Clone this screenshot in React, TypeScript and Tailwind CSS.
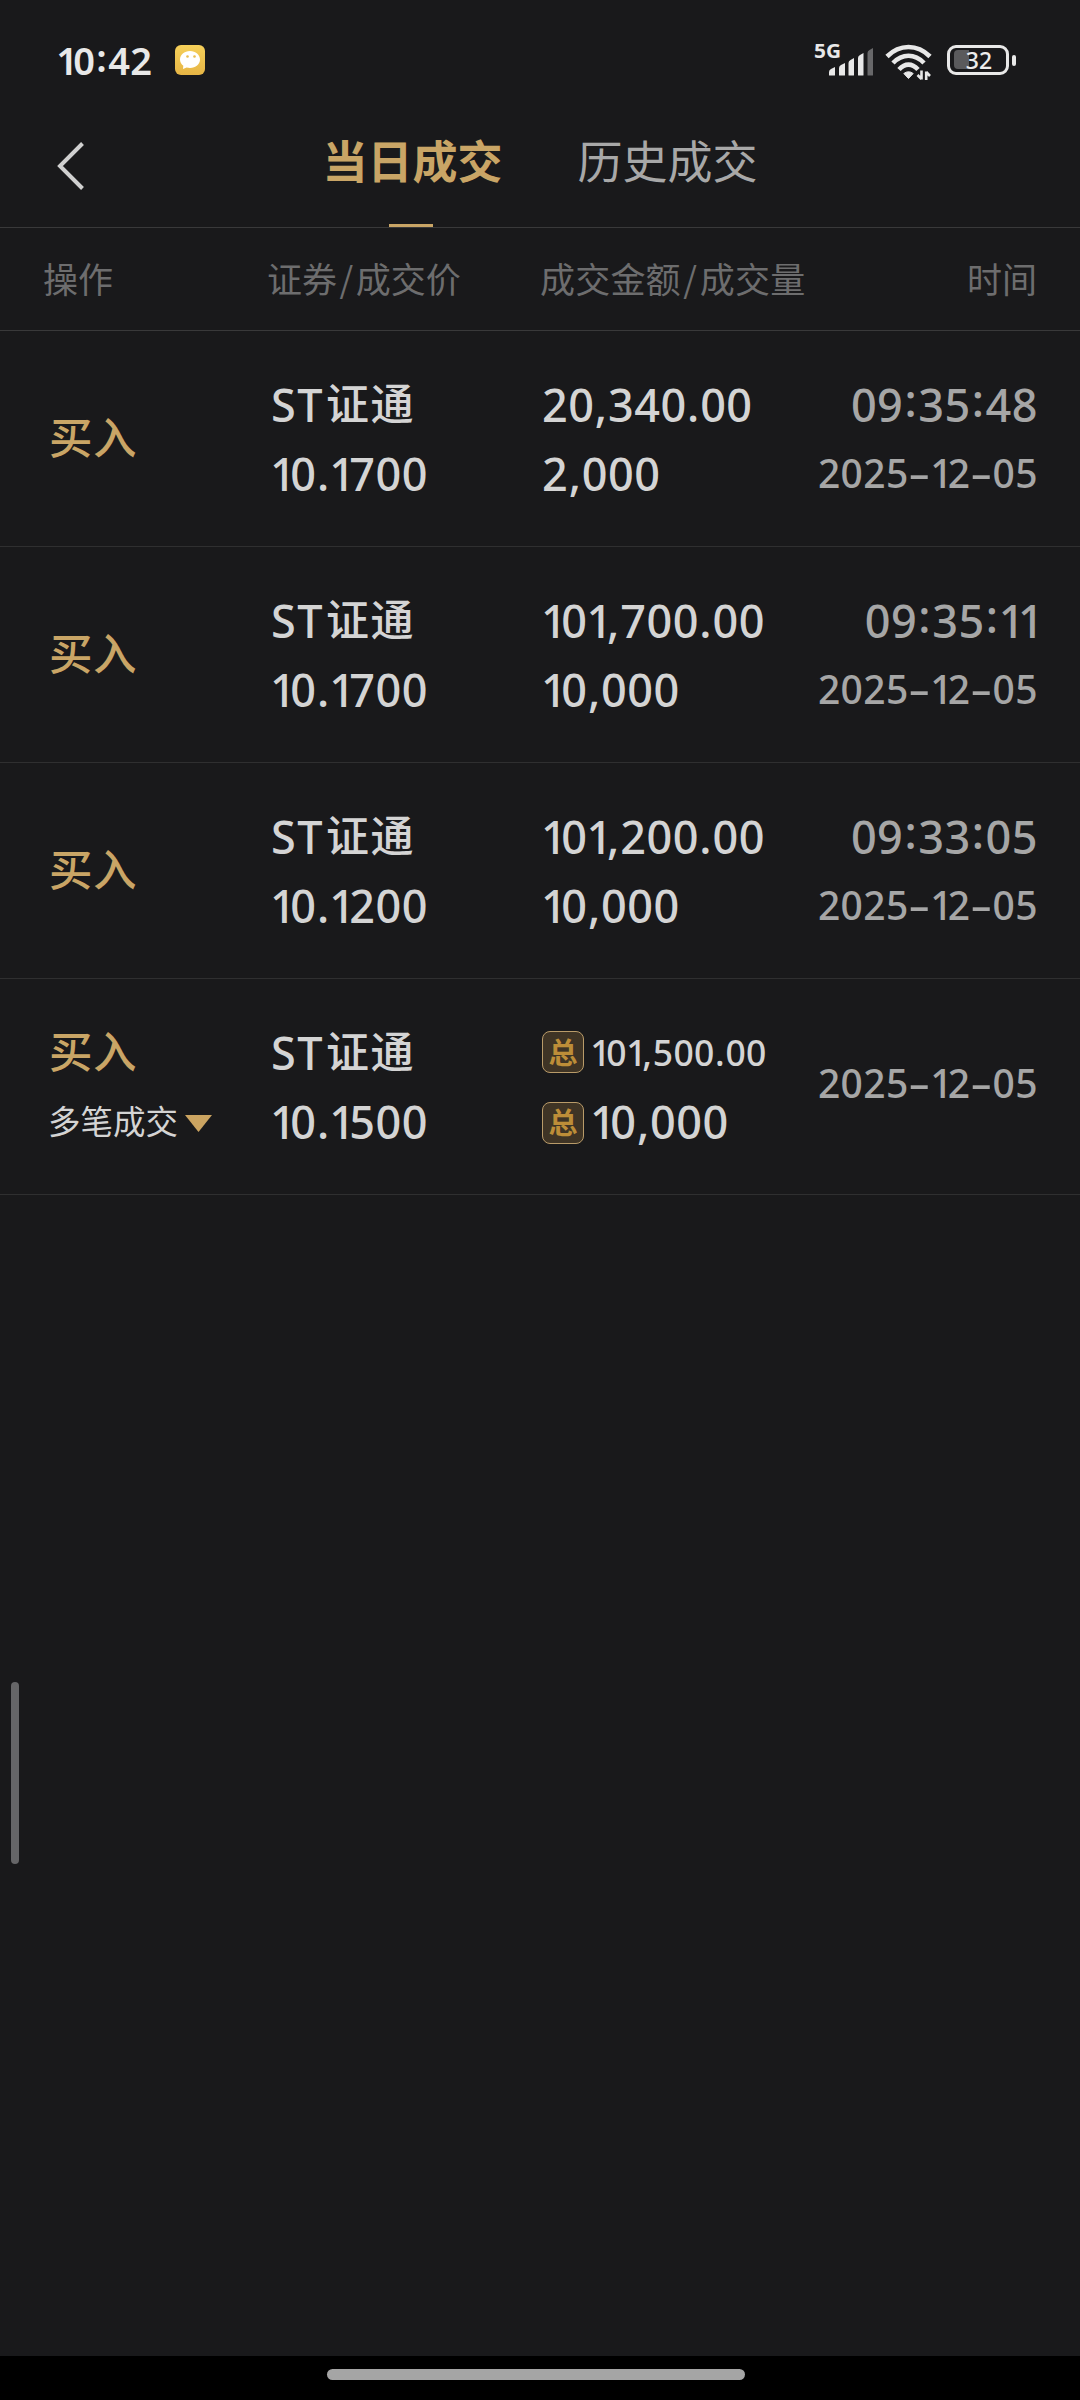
import React, { Fragment } from "react";

type Trade = {
  name: string;
  price: string;
  amount: string;
  volume: string;
  date: string;
  time?: string;
  multi?: boolean;
};

const trades: Trade[] = [
  { name: "证通", price: "10.1700", amount: "20,340.00", volume: "2,000", time: "09:35:48", date: "2025-12-05" },
  { name: "证通", price: "10.1700", amount: "101,700.00", volume: "10,000", time: "09:35:11", date: "2025-12-05" },
  { name: "证通", price: "10.1200", amount: "101,200.00", volume: "10,000", time: "09:33:05", date: "2025-12-05" },
  { name: "证通", price: "10.1500", amount: "101,500.00", volume: "10,000", date: "2025-12-05", multi: true },
];

/** Digits with proportional ones, raised colons and long hyphens. */
function Num({ children }: { children: string }) {
  return (
    <span className="tracking-[0.01em]">
      {children.split(/([1:.,-])/).map((part, i) => {
        if (part === "1") return <span key={i} className="-ml-[0.02em] tracking-[-0.125em]">1</span>;
        if (part === ":") return <span key={i} className="relative -top-[0.09em] mx-[0.025em]">:</span>;
        if (part === "-") return <span key={i} className="mx-[0.12em] inline-block scale-x-[1.75]">-</span>;
        if (part === "." || part === ",") return <span key={i} className="mx-[0.01em]">{part}</span>;
        return <Fragment key={i}>{part}</Fragment>;
      })}
    </span>
  );
}

function SignalIcon() {
  return (
    <svg width="60" height="44" viewBox="0 -5 60 44">
      <text x="0" y="15" fontSize="19.500" fontWeight="700" fill="#e8e8e8" fontFamily="'Noto Sans', sans-serif" textLength="27" lengthAdjust="spacingAndGlyphs">5G</text>
      <path d="M15 32v-3q0-2 2-3l4-2v8q0 .5-.5.500h-5Q15 32.500 15 32Z" fill="#e8e8e8" />
      <path d="M25 32v-7q0-2 2-3l4-2v12q0 .5-.5.500h-5Q25 32.500 25 32Z" fill="#e8e8e8" />
      <path d="M34.500 32V20q0-2 2-3l3.500-2v17q0 .5-.5.500h-4.500Q34.500 32.500 34.500 32Z" fill="#e8e8e8" />
      <path d="M44 32V15q0-2 2-3l3.500-2v22q0 .5-.5.500h-4.500Q44 32.500 44 32Z" fill="#e8e8e8" />
      <path d="M53.500 32V10q0-2 2-3l3.500-2v27q0 .5-.5.500h-4.500Q53.500 32.500 53.500 32Z" fill="#68686a" />
    </svg>
  );
}

function WifiIcon() {
  return (
    <svg width="48" height="36" viewBox="0 0 48 36" fill="none" stroke="#e8e8e8">
      <path d="M2 12.500Q11.500 3 23.500 3T45 12.500" strokeWidth="4.600" />
      <path d="M8 19Q15 11.800 23.500 11.800T39 19" strokeWidth="4.600" />
      <path d="M14 25.500Q18.500 20.600 23.500 20.600T33 25.500" strokeWidth="4.600" />
      <path d="M18.800 29.500Q23.500 26 28.200 29.500L23.500 34.500Z" fill="#e8e8e8" strokeWidth="1" />
      <path d="M36.500 26.500V35.500M36.500 35L32.500 31M41.200 36V27.500M41.200 28L45 32" strokeWidth="2.600" />
    </svg>
  );
}

function BatteryIcon() {
  return (
    <div className="flex items-center gap-[3px]">
      <div className="relative h-[30px] w-[62px] rounded-[9px] border-[3px] border-[#e8e8e8]">
        <div className="absolute left-[4px] top-[2px] h-[19px] w-[15px] rounded-l-[4px] bg-[#5a5a5c]" />
        <div className="absolute left-[1px] top-0 w-[56px] text-center font-['Noto_Sans'] text-[23px] leading-[24px] font-medium text-[#ececec]">32</div>
      </div>
      <div className="h-[11px] w-[4px] rounded-[2px] bg-[#e8e8e8]" />
    </div>
  );
}

function StatusBar() {
  return (
    <div className="flex h-[120px] items-center pr-[64px] pl-[57px]">
      <div className="w-[118px] whitespace-nowrap font-['Noto_Sans'] text-[38px] leading-none font-semibold text-[#e8e8e8]">
        <Num>10:42</Num>
      </div>
      <svg width="30" height="30" viewBox="0 0 30 30">
        <defs>
          <linearGradient id="chat" x1="0" y1="0" x2="0" y2="1">
            <stop offset="0" stopColor="#f6d05a" />
            <stop offset="1" stopColor="#e6b545" />
          </linearGradient>
        </defs>
        <rect width="30" height="30" rx="6" fill="url(#chat)" />
        <path d="M15 6C9.300 6 5 9.800 5 14.500c0 2.600 1.300 4.700 3.300 6.200L8 24l3.600-1.600c1.100.3 2.200.5 3.400.5 5.700 0 10-3.700 10-8.400S20.700 6 15 6Z" fill="#fff" />
        <circle cx="12.500" cy="11.500" r="1.300" fill="#e8bd50" />
        <circle cx="19.500" cy="11.500" r="1.300" fill="#e8bd50" />
      </svg>
      <div className="ml-auto flex items-center">
        <SignalIcon />
        <div className="ml-[11px] mt-[4px]"><WifiIcon /></div>
        <div className="ml-[14px]"><BatteryIcon /></div>
      </div>
    </div>
  );
}

function TotalBadge() {
  return (
    <span className="mr-[7px] flex size-[42px] items-center justify-center rounded-[8px] border border-[#b99b69] bg-[#3f3425] text-[29px] leading-none font-bold text-[#bd8d38]">
      总
    </span>
  );
}

const columns = "grid grid-cols-[222px_271px_1fr_auto]";

function TradeRow({ t }: { t: Trade }) {
  return (
    <div className={`${columns} h-[216px] items-center border-b border-[#2f2f30] pr-[42px] pl-[49px] font-['Noto_Sans','Noto_Sans_CJK_SC',sans-serif] text-[45px] leading-[69px] font-medium whitespace-nowrap text-[#d4d4d4]`}>
      <div>
        <div className={`${t.multi ? "" : "-mt-px mb-px"} text-[43.500px] tracking-[0.500px] font-medium text-[#c9a566]`}>买入</div>
        {t.multi && (
          <div className="-ml-px flex items-center gap-[7px] pt-px text-[32.500px] font-normal">
            多笔成交
            <svg className="mt-[3px]" width="27" height="17" viewBox="0 0 27 17"><path d="M0 0H27L13.500 17Z" fill="#cba461" /></svg>
          </div>
        )}
      </div>
      <div>
        <div className="tracking-[1.500px]">ST<span className="relative -top-[2px] ml-[2px] text-[43px] leading-none">{t.name}</span></div>
        <div><Num>{t.price}</Num></div>
      </div>
      <div>
        <div className="flex h-[69px] items-center">
          {t.multi && <TotalBadge />}
          <span className={t.multi ? "text-[35.500px]" : ""}><Num>{t.amount}</Num></span>
        </div>
        <div className="flex h-[69px] items-center">
          {t.multi && <div className="mt-[3px]"><TotalBadge /></div>}
          <span><Num>{t.volume}</Num></span>
        </div>
      </div>
      <div className="text-right text-[#a6a6a6]">
        {t.time && <div><Num>{t.time}</Num></div>}
        <div className={t.time ? "-mt-px mb-px text-[39px]" : "mb-[8px] text-[39px]"}><Num>{t.date}</Num></div>
      </div>
    </div>
  );
}

export default function App() {
  return (
    <div className="relative flex h-[2400px] w-[1080px] flex-col overflow-hidden bg-[#19191b] font-['Noto_Sans_CJK_SC',sans-serif]">
      <StatusBar />
      <header className="relative flex h-[108px] justify-center gap-[75px] border-b border-[#39393a] text-[45px] leading-[79px] whitespace-nowrap">
        <svg className="absolute left-[57px] top-[21px]" width="28" height="50" viewBox="0 0 28 50" fill="none" stroke="#d0d0d0" strokeWidth="4">
          <path d="M25.500 2.500L3 25L25.500 47.500" />
        </svg>
        <div className="relative h-full font-bold text-[#c9a566]">
          当日成交
          <div className="absolute bottom-0 left-[67px] h-[3px] w-[44px] bg-[#c9a566]" />
        </div>
        <div className="text-[#a8a8a8]">历史成交</div>
      </header>
      <div className="grid h-[103px] grid-cols-[224px_273px_1fr_auto] items-center border-b border-[#39393a] pr-[43px] pb-[2px] pl-[43px] text-[35px] whitespace-nowrap text-[#6d6d6e]">
        <div>操作</div>
        <div>证券<span className="mx-[2.500px]">/</span>成交价</div>
        <div className="tracking-[0.200px]">成交金额<span className="mx-[2.500px]">/</span>成交量</div>
        <div>时间</div>
      </div>
      {trades.map((t, i) => <TradeRow key={i} t={t} />)}
      <div className="absolute left-[11px] top-[1682px] h-[182px] w-[8px] rounded-full bg-[#666668]" />
      <div className="mt-auto flex h-[44px] justify-center bg-black pt-[13px]">
        <div className="mr-[8px] h-[11px] w-[418px] rounded-full bg-[#a5a5a5]" />
      </div>
    </div>
  );
}
